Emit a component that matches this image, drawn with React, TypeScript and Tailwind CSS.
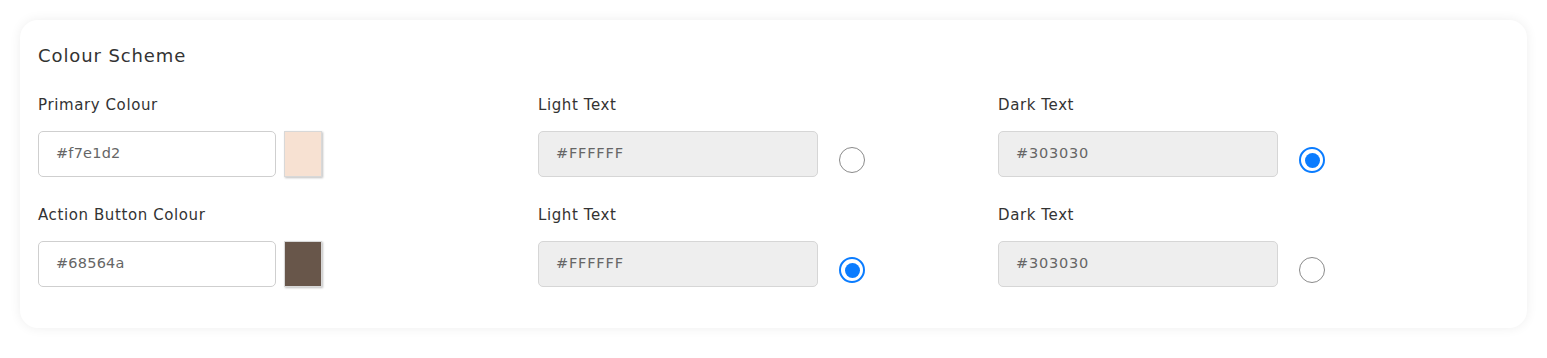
const font = { fontFamily: '"DejaVu Sans", "Noto Sans", sans-serif' };

function Radio({ checked }: { checked: boolean }) {
  return checked ? (
    <span className="flex h-[26px] w-[26px] shrink-0 items-center justify-center rounded-full border-2 border-[#0a7cff] bg-white">
      <span className="block h-[15px] w-[15px] rounded-full bg-[#0a7cff]" />
    </span>
  ) : (
    <span className="block h-[26px] w-[26px] shrink-0 rounded-full border-[1.5px] border-[#8a8a8a] bg-white" />
  );
}

function ColourField({ label, value }: { label: string; value: string }) {
  return (
    <div className="w-[500px] shrink-0">
      <div className="text-[15px] text-[#333] leading-[20px] tracking-[0.6px]">{label}</div>
      <div className="mt-[16px] flex gap-[8px]">
        <div className="flex h-[46px] w-[238px] items-center rounded-[5px] border border-[#cfcfcf] bg-white px-[17px] text-[14.5px] tracking-[0.2px] text-[#666]">
          {value}
        </div>
        <div
          className="h-[46px] w-[38px] border border-[#d8d8d8] shadow-[1px_1px_2px_rgba(0,0,0,0.25)]"
          style={{ backgroundColor: value }}
        />
      </div>
    </div>
  );
}

function TextField({ label, value, checked, width }: { label: string; value: string; checked: boolean; width: string }) {
  return (
    <div className={width}>
      <div className="text-[15px] text-[#333] leading-[20px] tracking-[0.6px]">{label}</div>
      <div className="mt-[16px] flex items-end gap-[21px]">
        <div className="flex h-[46px] w-[280px] items-center rounded-[5px] border border-[#d6d6d6] bg-[#eeeeee] px-[17px] text-[14.5px] tracking-[0.8px] text-[#666]">
          {value}
        </div>
        <div className="mb-[4px]">
          <Radio checked={checked} />
        </div>
      </div>
    </div>
  );
}

const rows = [
  { label: 'Primary Colour', value: '#f7e1d2', light: false },
  { label: 'Action Button Colour', value: '#68564a', light: true },
];

export default function App() {
  return (
    <div className="min-h-[358px] bg-white px-[20px] pt-[20px]" style={font}>
      <div className="h-[308px] rounded-[18px] bg-white px-[18px] pt-[25px] shadow-[0_0_12px_rgba(0,0,0,0.07)]">
        <h2 className="text-[18px] font-medium text-[#333] leading-[22px] tracking-[0.9px]">Colour Scheme</h2>
        <div className="mt-[28px] flex flex-col gap-[28px]">
          {rows.map((row) => (
            <div key={row.label} className="flex">
              <ColourField label={row.label} value={row.value} />
              <TextField label="Light Text" value="#FFFFFF" checked={row.light} width="w-[460px] shrink-0" />
              <TextField label="Dark Text" value="#303030" checked={!row.light} width="flex-1" />
            </div>
          ))}
        </div>
      </div>
    </div>
  );
}
